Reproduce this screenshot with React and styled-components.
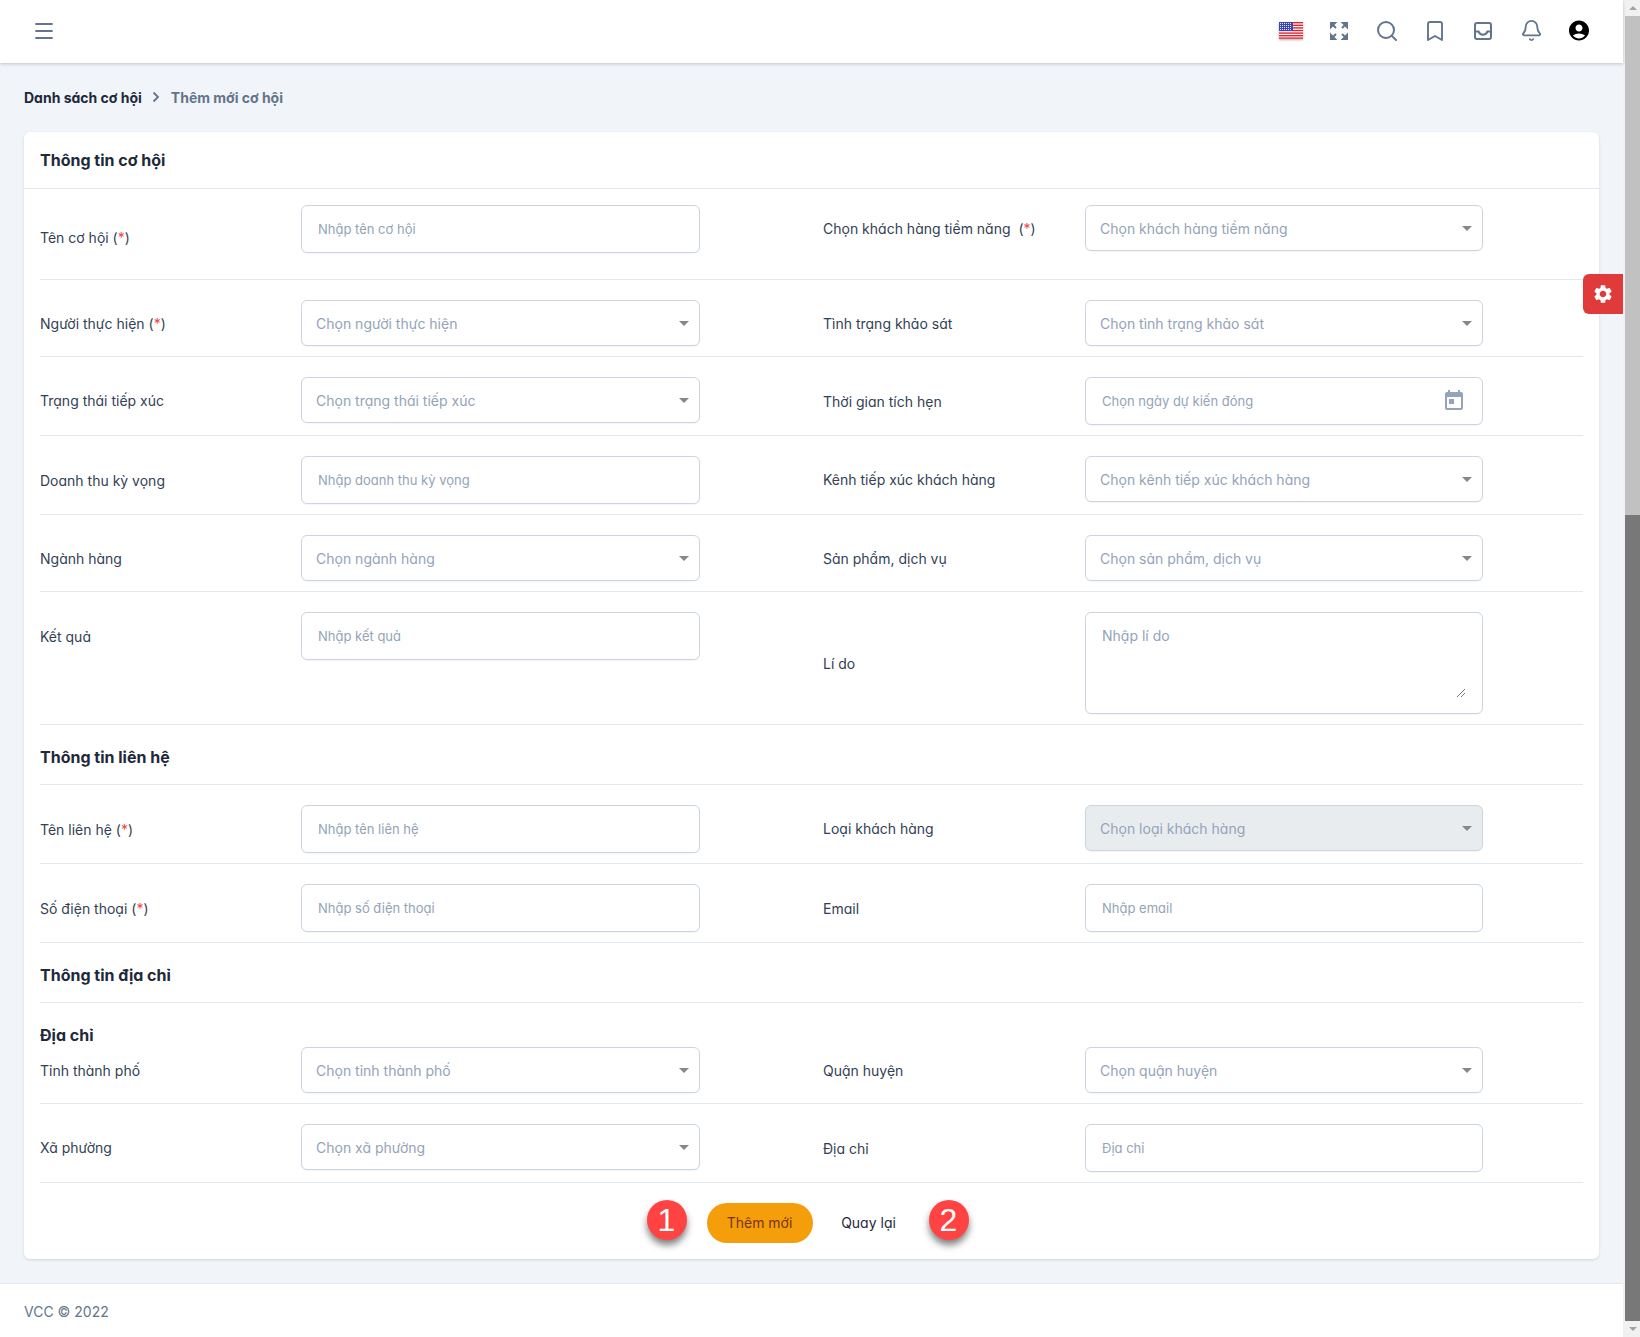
import React from 'react';
import styled, { createGlobalStyle, css } from 'styled-components';
import { Menu, Search, Bookmark, Bell } from 'lucide-react';
import { MdAccountCircle, MdToday, MdSettings } from 'react-icons/md';

const GlobalStyle = createGlobalStyle`
    html, body {
        margin: 0;
        padding: 0;
        height: 1337px;
        overflow: hidden;
    }
    body {
        font-family: "Inter", "Noto Sans", sans-serif;
        font-feature-settings: "cv11";
        color: #1e293b;
        background: #f1f5f9;
    }
    * {
        box-sizing: border-box;
    }
`;

const Shell = styled.div`
    display: flex;
    height: 1337px;
`;

const Main = styled.div`
    position: relative;
    flex: 1;
    min-width: 0;
    display: flex;
    flex-direction: column;
`;

const Scrollbar = styled.div`
    width: 17px;
    display: flex;
    flex-direction: column;
    background: #f1f1f1;
`;

const ScrollArrow = styled.div`
    height: 16px;
    display: flex;
    align-items: center;
    justify-content: center;
    padding-left: 2px;
    &::after {
        content: '';
        border-left: 4px solid transparent;
        border-right: 4px solid transparent;
        ${p => p.$down
            ? css`border-top: 4px solid #a3a3a3;`
            : css`border-bottom: 4px solid #a3a3a3;`}
    }
`;

const ScrollTrack = styled.div`
    flex: ${p => p.$grow};
    margin-left: 2px;
    background: ${p => p.$active ? '#787878' : '#c1c1c1'};
`;

const Topbar = styled.header`
    height: 63px;
    flex: none;
    display: flex;
    align-items: center;
    justify-content: space-between;
    padding: 0 32px 2px 32px;
    background: #fff;
    box-shadow: 0 1px 3px rgba(15, 23, 42, .22);
    color: #64748b;
`;

const TopActions = styled.div`
    display: flex;
    align-items: center;
    gap: 24px;
`;

const IconSlot = styled.span`
    width: 24px;
    height: 24px;
    display: flex;
    align-items: center;
    justify-content: center;
`;

const Content = styled.main`
    flex: 1;
    padding: 24px 24px 24px 24px;
`;

const Crumbs = styled.nav`
    display: flex;
    align-items: center;
    height: 20px;
    margin-bottom: 25px;
    font-size: 14px;
    font-weight: 700;
    color: #64748b;
    b {
        font-weight: 700;
        color: #1e293b;
    }
    svg {
        margin: 0 11px 0 10px;
    }
`;

const Card = styled.section`
    background: #fff;
    border-radius: 6px;
    box-shadow: 0 1px 3px rgba(15, 23, 42, .14);
    height: 1127px;
`;

const CardHead = styled.h2`
    margin: 0;
    height: 57px;
    display: flex;
    align-items: center;
    padding: 0 16px;
    font-size: 16px;
    font-weight: 700;
    border-bottom: 1px solid #e2e8f0;
`;

const Body = styled.div`
    padding: 0 16px;
`;

const Row = styled.div`
    display: grid;
    grid-template-columns: 261px 399px 123px 262px 398px;
    align-items: ${p => p.$top ? 'start' : 'center'};
    padding: ${p => p.$first ? '16px 0 26px' : '20px 0 10px'};
    border-bottom: 1px solid #e2e8f0;
`;

const Spacer = styled.span``;

const Label = styled.label`
    font-size: 14px;
    line-height: 20px;
    color: #334155;
    position: relative;
    top: ${p => p.$shift ?? 1}px;
    i {
        font-style: normal;
        color: #ef4444;
    }
`;

const TextBox = styled.div`
    height: 48px;
    border: 1px solid #cbd5e1;
    border-radius: 6px;
    background: #fff;
    display: flex;
    align-items: center;
    justify-content: space-between;
    padding: 0 16px;
    font-size: 13px;
    color: #94a3b8;
    box-shadow: 0 1px 1px rgba(15, 23, 42, .04);
`;

const SelectBox = styled.div`
    align-self: start;
    height: 46px;
    border: 1px solid #cbd5e1;
    border-radius: 6px;
    background: ${p => p.$disabled ? '#e9ecef' : '#fff'};
    display: flex;
    align-items: center;
    justify-content: space-between;
    padding: 0 10px 0 14px;
    font-size: 14px;
    color: #94a3b8;
    box-shadow: 0 1px 1px rgba(15, 23, 42, .04);
    &::after {
        content: '';
        border-left: 5px solid transparent;
        border-right: 5px solid transparent;
        border-top: 5px solid #888;
    }
`;

const AreaBox = styled.div`
    position: relative;
    height: 102px;
    border: 1px solid #cbd5e1;
    border-radius: 6px;
    padding: 13px 16px;
    font-size: 14px;
    line-height: 20px;
    color: #94a3b8;
    box-shadow: 0 1px 1px rgba(15, 23, 42, .04);
`;

const Grip = styled.svg`
    position: absolute;
    right: 16px;
    bottom: 15px;
`;

const SectionTitle = styled.h3`
    margin: 0;
    height: 60px;
    padding-top: 21px;
    font-size: 16px;
    font-weight: 700;
    line-height: 22px;
    border-bottom: 1px solid #e2e8f0;
`;

const SubTitle = styled.h4`
    margin: 0;
    padding: 21px 0 1px;
    font-size: 16px;
    font-weight: 700;
    line-height: 22px;
`;

const AddressRow = styled(Row)`
    padding-top: 0;
`;

const Actions = styled.div`
    display: flex;
    justify-content: center;
    padding-top: 20px;
`;

const ActionGroup = styled.div`
    position: relative;
    display: flex;
    gap: 8px;
`;

const Button = styled.button`
    height: 40px;
    width: ${p => p.$w}px;
    border: 0;
    border-radius: 20px;
    padding: 0 0 2px;
    font: inherit;
    font-size: 14px;
    background: ${p => p.$primary ? '#f59e0b' : 'transparent'};
    color: ${p => p.$primary ? '#78350f' : '#1e293b'};
`;

const Marker = styled.span`
    position: absolute;
    top: -3px;
    left: ${p => p.$x}px;
    width: 40px;
    height: 40px;
    border-radius: 50%;
    display: flex;
    align-items: center;
    justify-content: center;
    background: #ff4343;
    color: #fff;
    font-family: "Liberation Sans", Arial, sans-serif;
    font-size: 32px;
    box-shadow: 0 5px 7px rgba(0, 0, 0, .5);
`;

const Footer = styled.footer`
    height: 54px;
    flex: none;
    display: flex;
    align-items: center;
    padding: 2px 24px 0;
    background: #fff;
    border-top: 1px solid #e2e8f0;
    font-size: 14px;
    color: #64748b;
`;

const SettingsTab = styled.button`
    position: absolute;
    top: 274px;
    right: 0;
    width: 40px;
    height: 40px;
    border: 0;
    padding: 0;
    display: flex;
    align-items: center;
    justify-content: center;
    border-radius: 6px 0 0 6px;
    background: #e03a3a;
    color: #fff;
`;

// icons that the packages don't have in this exact shape
const Flag = () => (
    <svg width="24" height="17" viewBox="0 0 24 17" style={{ filter: 'drop-shadow(0 1px 1px rgba(0,0,0,.3))' }}>
        <rect width="24" height="17" fill="#fff" />
        {[0, 2.6, 5.2, 7.8, 10.4, 13, 15.4].map(y => (
            <rect key={y} y={y} width="24" height="1.4" fill="#e0232e" />
        ))}
        <rect width="14" height="9" fill="#3b46b4" />
        {[1.5, 3.5, 5.5, 7.5].map(y => (
            <line key={y} x1="1" x2="13" y1={y} y2={y} stroke="#dfe3f5" strokeWidth="1" strokeDasharray="1 1" />
        ))}
    </svg>
);

const Expand = () => (
    <svg width="20" height="20" viewBox="0 0 20 20" fill="#64748b" stroke="#64748b" strokeWidth="2">
        <path d="M2 6V2h4zM3 3l4 4" />
        <path d="M18 6V2h-4zM17 3l-4 4" />
        <path d="M2 14v4h4zM3 17l4-4" />
        <path d="M18 14v4h-4zM17 17l-4-4" />
    </svg>
);

const InboxIcon = () => (
    <svg width="20" height="20" viewBox="0 0 20 20" fill="none" stroke="#64748b" strokeWidth="2">
        <rect x="2" y="2" width="16" height="16" rx="2" />
        <path d="M2 10.500h3.500c1 2.400 2.600 3.200 4.500 3.200s3.500-.8 4.500-3.200H18" />
    </svg>
);

const Resize = () => (
    <Grip width="10" height="10" viewBox="0 0 10 10" stroke="#555" strokeWidth=".8">
        <path d="M1 9l8-8M5 9l4-4" />
    </Grip>
);

const Field = ({ label, req, shift, type, text, disabled }) => (
    <>
        <Label $shift={shift}>{label}{req && <> (<i>*</i>)</>}</Label>
        {type === 'select' && <SelectBox $disabled={disabled}>{text}</SelectBox>}
        {type === 'input' && <TextBox>{text}</TextBox>}
        {type === 'date' && <TextBox>{text}<MdToday size={24} color="#94a3b8" /></TextBox>}
    </>
);

const Line = ({ left, right, ...rest }) => (
    <Row {...rest}>
        <Field {...left} />
        <Spacer />
        <Field {...right} />
    </Row>
);

const App = () => {
    return (
        <Shell>
            <GlobalStyle />
            <Main>
                <Topbar>
                    <IconSlot><Menu size={24} strokeWidth={1.8} /></IconSlot>
                    <TopActions>
                        <IconSlot><Flag /></IconSlot>
                        <IconSlot><Expand /></IconSlot>
                        <IconSlot><Search size={24} strokeWidth={2} /></IconSlot>
                        <IconSlot><Bookmark size={26} strokeWidth={1.9} /></IconSlot>
                        <IconSlot><InboxIcon /></IconSlot>
                        <IconSlot><Bell size={23} strokeWidth={1.9} /></IconSlot>
                        <IconSlot><MdAccountCircle size={31} color="#000" /></IconSlot>
                    </TopActions>
                </Topbar>
                <Content>
                    <Crumbs>
                        <b>Danh sách cơ hội</b>
                        <svg width="8" height="12" viewBox="0 0 8 12" fill="none" stroke="#64748b" strokeWidth="1.8">
                            <path d="M1.500 1.500L6 6l-4.500 4.500" />
                        </svg>
                        Thêm mới cơ hội
                    </Crumbs>
                    <Card>
                        <CardHead>Thông tin cơ hội</CardHead>
                        <Body>
                            <Line $first
                                left={{ label: 'Tên cơ hội', req: true, shift: 9, type: 'input', text: 'Nhập tên cơ hội' }}
                                right={{ label: 'Chọn khách hàng tiềm năng\u00a0', req: true, shift: 0, type: 'select', text: 'Chọn khách hàng tiềm năng' }} />
                            <Line
                                left={{ label: 'Người thực hiện', req: true, type: 'select', text: 'Chọn người thực hiện' }}
                                right={{ label: 'Tình trạng khảo sát', type: 'select', text: 'Chọn tình trạng khảo sát' }} />
                            <Line
                                left={{ label: 'Trạng thái tiếp xúc', shift: 0, type: 'select', text: 'Chọn trạng thái tiếp xúc' }}
                                right={{ label: 'Thời gian tích hẹn', type: 'date', text: 'Chọn ngày dự kiến đóng' }} />
                            <Line
                                left={{ label: 'Doanh thu kỳ vọng', type: 'input', text: 'Nhập doanh thu kỳ vọng' }}
                                right={{ label: 'Kênh tiếp xúc khách hàng', shift: 0, type: 'select', text: 'Chọn kênh tiếp xúc khách hàng' }} />
                            <Line
                                left={{ label: 'Ngành hàng', type: 'select', text: 'Chọn ngành hàng' }}
                                right={{ label: 'Sản phẩm, dịch vụ', type: 'select', text: 'Chọn sản phẩm, dịch vụ' }} />
                            <Row $top>
                                <Label $shift={15}>Kết quả</Label>
                                <TextBox>Nhập kết quả</TextBox>
                                <Spacer />
                                <Label $shift={42}>Lí do</Label>
                                <AreaBox>
                                    Nhập lí do
                                    <Resize />
                                </AreaBox>
                            </Row>
                            <SectionTitle>Thông tin liên hệ</SectionTitle>
                            <Line
                                left={{ label: 'Tên liên hệ', req: true, type: 'input', text: 'Nhập tên liên hệ' }}
                                right={{ label: 'Loại khách hàng', shift: 0, type: 'select', text: 'Chọn loại khách hàng', disabled: true }} />
                            <Line
                                left={{ label: 'Số điện thoại', req: true, type: 'input', text: 'Nhập số điện thoại' }}
                                right={{ label: 'Email', type: 'input', text: 'Nhập email' }} />
                            <SectionTitle>Thông tin địa chỉ</SectionTitle>
                            <SubTitle>Địa chỉ</SubTitle>
                            <AddressRow>
                                <Field label="Tỉnh thành phố" type="select" text="Chọn tỉnh thành phố" />
                                <Spacer />
                                <Field label="Quận huyện" type="select" text="Chọn quận huyện" />
                            </AddressRow>
                            <Line
                                left={{ label: 'Xã phường', shift: 0, type: 'select', text: 'Chọn xã phường' }}
                                right={{ label: 'Địa chỉ', type: 'input', text: 'Địa chỉ' }} />
                            <Actions>
                                <ActionGroup>
                                    <Marker $x={-60}>1</Marker>
                                    <Button $primary $w={106}>Thêm mới</Button>
                                    <Button $w={96}>Quay lại</Button>
                                    <Marker $x={222}>2</Marker>
                                </ActionGroup>
                            </Actions>
                        </Body>
                    </Card>
                </Content>
                <Footer>VCC © 2022</Footer>
                <SettingsTab><MdSettings size={22} /></SettingsTab>
            </Main>
            <Scrollbar>
                <ScrollArrow />
                <ScrollTrack $grow={499} />
                <ScrollTrack $grow={806} $active />
                <ScrollArrow $down />
            </Scrollbar>
        </Shell>
    );
};

export default App;
